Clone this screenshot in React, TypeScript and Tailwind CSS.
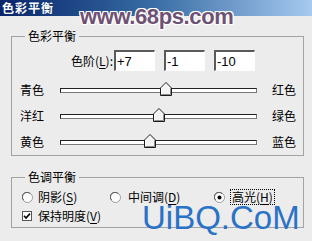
import React from "react";

const cjk = { fontFamily: '"Noto Sans CJK SC", "Noto Sans", sans-serif' };

function Ul({ children }: { children: React.ReactNode }) {
  return <span className="underline underline-offset-2">{children}</span>;
}

function Thumb() {
  return (
    <svg width="12" height="14" viewBox="0 0 12 14" className="block">
      <polygon points="6,0.5 11.5,6 11.5,13.5 0.5,13.5 0.5,6" fill="#f4f4f4" stroke="#1a1a1a" strokeWidth="1" />
      <polyline points="1.5,12.5 1.5,6.4 6,1.9" fill="none" stroke="#ffffff" strokeWidth="1" />
      <polyline points="1.5,12.5 10.5,12.5 10.5,6.4" fill="none" stroke="#8a8a8a" strokeWidth="1" />
    </svg>
  );
}

function SliderRow({ left, right, value }: { left: string; right: string; value: number }) {
  const pos = 98.5 + value * 0.95;
  return (
    <div className="flex h-[26px] items-center">
      <span className="w-[48px] pl-[8px] text-[12px] leading-none">{left}</span>
      <div className="relative h-[5px] w-[197px] border border-[#222] border-b-[#777] border-r-[#777] bg-white">
        <div className="absolute top-[-7px]" style={{ left: pos - 6 }}>
          <Thumb />
        </div>
      </div>
      <span className="ml-[15px] text-[12px] leading-none">{right}</span>
    </div>
  );
}

function LevelInput({ value }: { value: string }) {
  return (
    <div
      className="flex h-[21px] w-[41px] items-center border-t-2 border-l-2 border-b border-r border-t-[#5a5a5a] border-l-[#5a5a5a] border-b-white border-r-white bg-white pl-[1px] text-[13px] leading-none text-black"
      style={{ fontFamily: '"Liberation Sans", sans-serif' }}
    >
      {value}
    </div>
  );
}

function Radio({ checked }: { checked?: boolean }) {
  return (
    <svg width="11" height="11" viewBox="0 0 11 11" className="block">
      <circle cx="5.5" cy="5.5" r="5" fill="#ffffff" stroke="#9a9a9a" strokeWidth="1" />
      <path d="M1.6 8 A4.5 4.5 0 0 1 8 1.6" fill="none" stroke="#555" strokeWidth="1" />
      {checked && <circle cx="5.5" cy="5.5" r="2" fill="#000" />}
    </svg>
  );
}

export default function App() {
  return (
    <div className="relative h-[241px] w-[312px] overflow-hidden bg-[#ececec] text-black" style={cjk}>
      <div className="flex h-[16px] items-center bg-gradient-to-r from-[#0a246a] via-[#3a6ea5] to-[#a6caf0] pl-[2px] text-[12px] font-bold tracking-[1px] text-white">
        色彩平衡
      </div>

      <fieldset className="mt-[13px] ml-[11px] w-[293px] border border-[#a3a3a3] px-0 pt-[7px] pb-0">
        <legend className="ml-[13px] px-[3px] text-[12px] leading-[14px]">色彩平衡</legend>
        <div className="flex h-[21px] items-center">
          <span className="w-[101px] text-right text-[12px] leading-none">
            色阶(<Ul>L</Ul>):
          </span>
          <div className="ml-[1px] flex gap-[9px]">
            <LevelInput value="+7" />
            <LevelInput value="-1" />
            <LevelInput value="-10" />
          </div>
        </div>
        <div className="mt-[6px] flex flex-col">
          <SliderRow left="青色" right="红色" value={7} />
          <SliderRow left="洋红" right="绿色" value={-1} />
          <SliderRow left="黄色" right="蓝色" value={-10} />
        </div>
      </fieldset>

      <fieldset className="mt-[14px] ml-[11px] w-[293px] border border-[#a3a3a3] px-0 pt-[6px] pb-[4px]">
        <legend className="ml-[13px] px-[3px] text-[12px] leading-[14px]">色调平衡</legend>
        <div className="flex h-[14px] items-center pl-[10px] text-[12px] leading-none">
          <div className="flex w-[88px] items-center">
            <Radio />
            <span className="ml-[5px]">
              阴影(<Ul>S</Ul>)
            </span>
          </div>
          <div className="flex w-[104px] items-center">
            <Radio />
            <span className="ml-[7px]">
              中间调(<Ul>D</Ul>)
            </span>
          </div>
          <div className="flex items-center">
            <Radio checked />
            <span className="ml-[5px] border border-dotted border-black px-[1px] py-[1px]">
              高光(<Ul>H</Ul>)
            </span>
          </div>
        </div>
        <div className="mt-[5px] flex h-[14px] items-center pl-[10px] text-[12px] leading-none">
          <svg width="10" height="10" viewBox="0 0 10 10" className="block">
            <rect x="0.5" y="0.5" width="9" height="9" fill="#fff" stroke="#555" />
            <path d="M2 4.8 L4 7 L8 2.6" fill="none" stroke="#000" strokeWidth="1.6" />
          </svg>
          <span className="ml-[6px]">
            保持明度(<Ul>V</Ul>)
          </span>
        </div>
      </fieldset>

      <div
        className="absolute left-[80px] top-[6px] text-[22px] font-bold leading-[22px] tracking-[-0.4px] text-[#6e5274]"
        style={{
          fontFamily: '"Liberation Sans", sans-serif',
          textShadow:
            "1px 0 0 #fff, -1px 0 0 #fff, 0 1px 0 #fff, 0 -1px 0 #fff, 1px 1px 0 #fff, -1px -1px 0 #fff, 1px -1px 0 #fff, -1px 1px 0 #fff",
        }}
      >
        www.68ps.com
      </div>
      <div
        className="absolute left-[142px] top-[201px] text-[33px] leading-[33px] text-[#2a72c8]"
        style={{ fontFamily: '"Liberation Sans", sans-serif' }}
      >
        UiBQ.CoM
      </div>
    </div>
  );
}
